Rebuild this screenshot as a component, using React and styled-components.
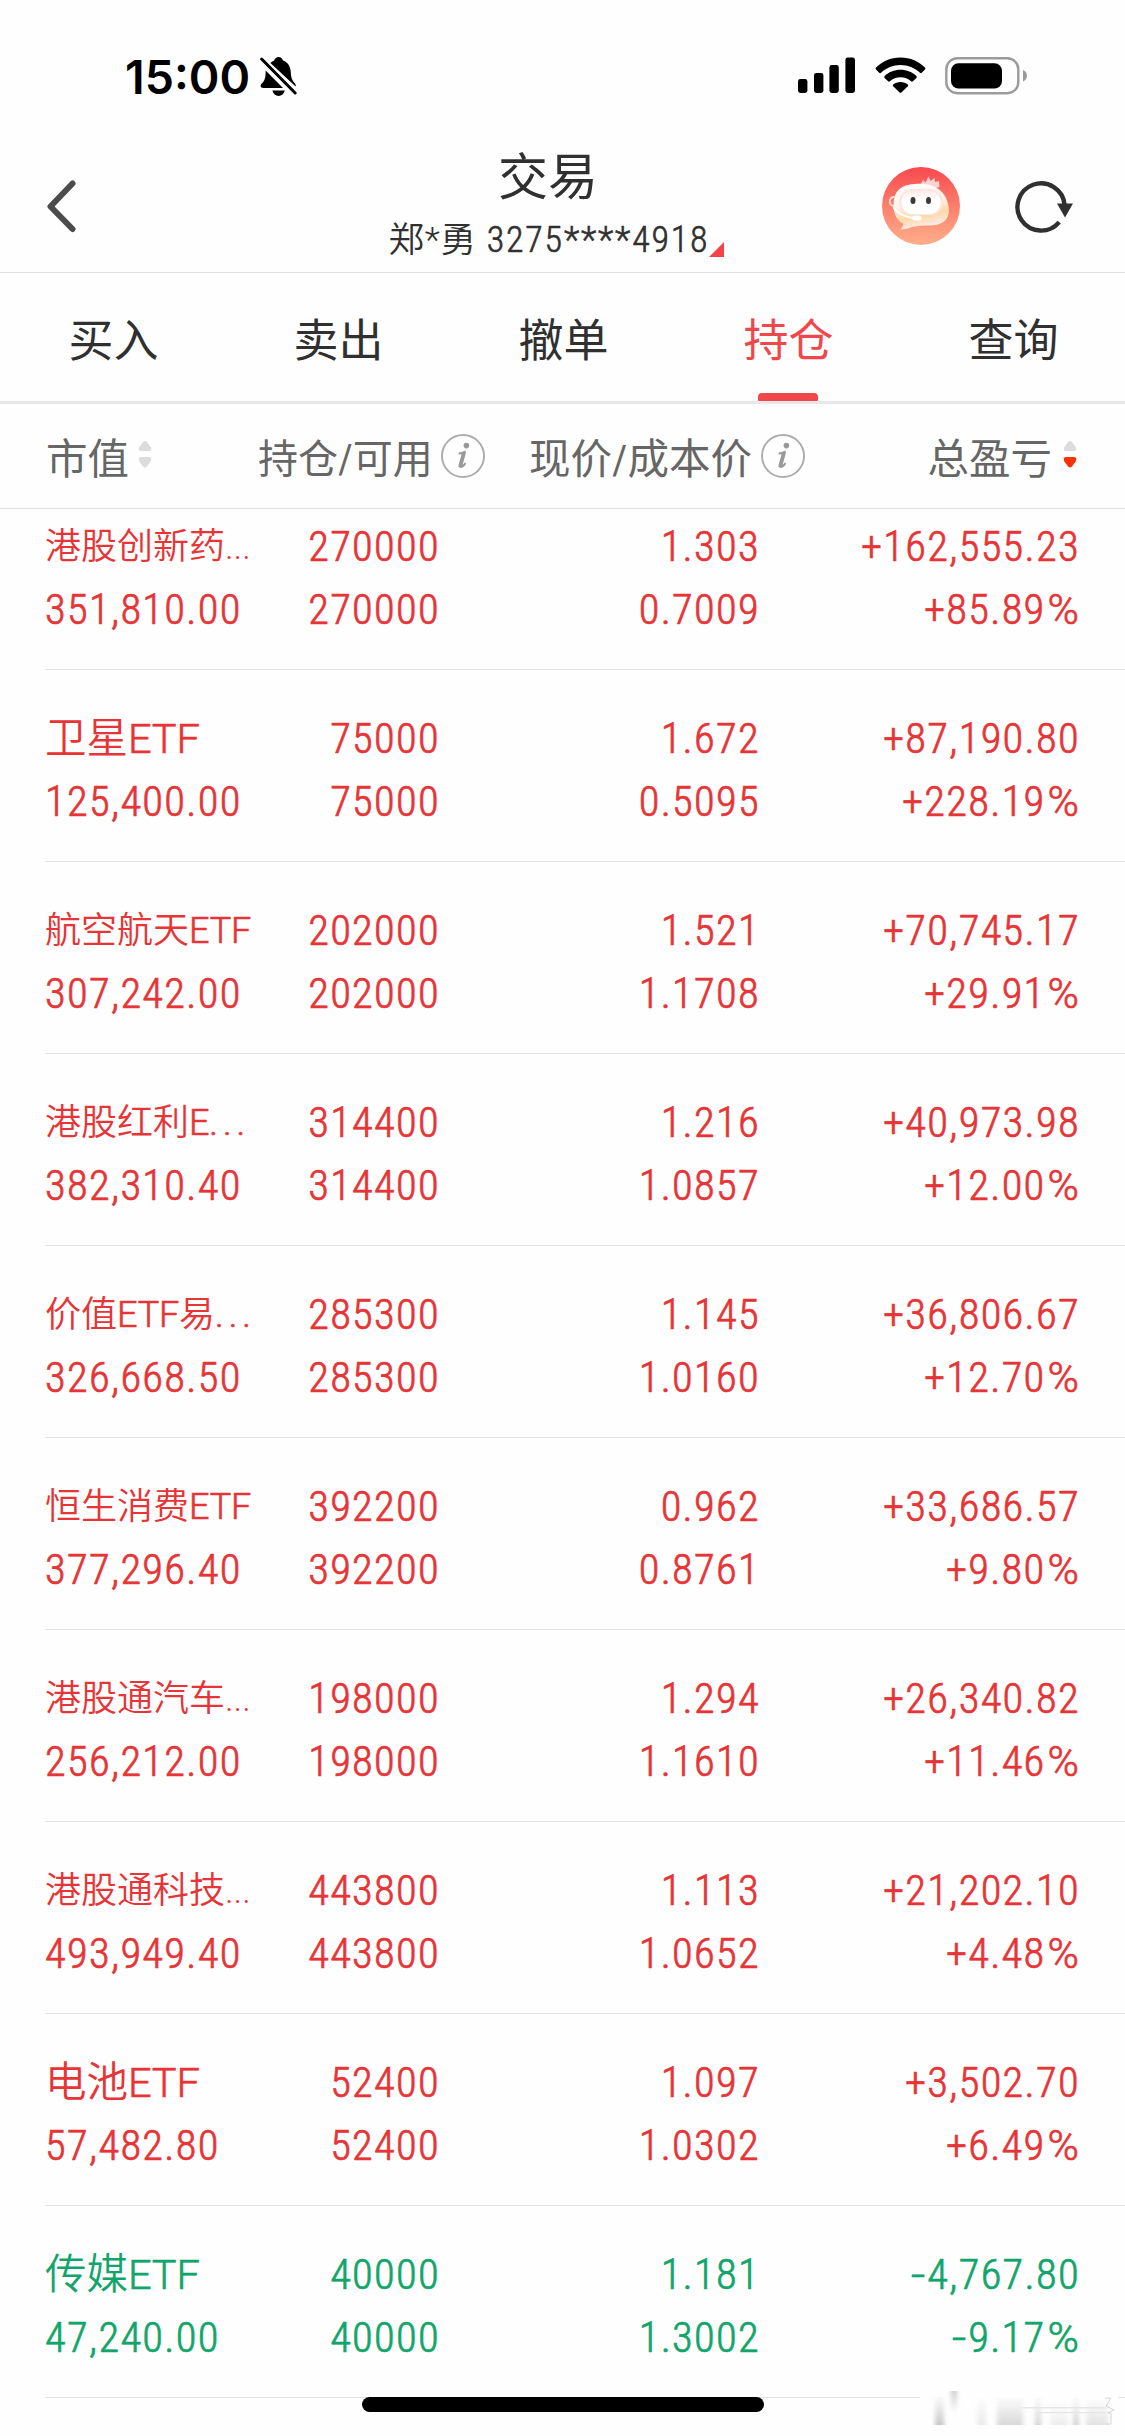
import React from "react";
import styled, { createGlobalStyle } from "styled-components";

const tabs = ["买入", "卖出", "撤单", "持仓", "查询"];

const holdings = [
  { name: "港股创新药...", small: true, value: "351,810.00", qty: "270000", usable: "270000", price: "1.303", cost: "0.7009", profit: "+162,555.23", rate: "+85.89%" },
  { name: "卫星ETF", value: "125,400.00", qty: "75000", usable: "75000", price: "1.672", cost: "0.5095", profit: "+87,190.80", rate: "+228.19%" },
  { name: "航空航天ETF", small: true, value: "307,242.00", qty: "202000", usable: "202000", price: "1.521", cost: "1.1708", profit: "+70,745.17", rate: "+29.91%" },
  { name: "港股红利E", dots: true, small: true, value: "382,310.40", qty: "314400", usable: "314400", price: "1.216", cost: "1.0857", profit: "+40,973.98", rate: "+12.00%" },
  { name: "价值ETF易", dots: true, small: true, value: "326,668.50", qty: "285300", usable: "285300", price: "1.145", cost: "1.0160", profit: "+36,806.67", rate: "+12.70%" },
  { name: "恒生消费ETF", small: true, value: "377,296.40", qty: "392200", usable: "392200", price: "0.962", cost: "0.8761", profit: "+33,686.57", rate: "+9.80%" },
  { name: "港股通汽车...", small: true, value: "256,212.00", qty: "198000", usable: "198000", price: "1.294", cost: "1.1610", profit: "+26,340.82", rate: "+11.46%" },
  { name: "港股通科技...", small: true, value: "493,949.40", qty: "443800", usable: "443800", price: "1.113", cost: "1.0652", profit: "+21,202.10", rate: "+4.48%" },
  { name: "电池ETF", value: "57,482.80", qty: "52400", usable: "52400", price: "1.097", cost: "1.0302", profit: "+3,502.70", rate: "+6.49%" },
  { name: "传媒ETF", value: "47,240.00", qty: "40000", usable: "40000", price: "1.181", cost: "1.3002", profit: "-4,767.80", rate: "-9.17%", down: true },
];

const SortIcon = ({ desc }) => (
  <SortSvg width="14" height="28" viewBox="0 0 14 28">
    <path d="M7 1 Q8 1 9 2 L13 7.5 Q14 11 11 11 H3 Q0 11 1 7.5 L5 2 Q6 1 7 1Z" fill="#dcdcdc" />
    <path d="M7 27.5 Q6 27.5 5 26.5 L1 21 Q0 17 3 17 H11 Q14 17 13 21 L9 26.5 Q8 27.5 7 27.5Z" fill={desc ? "#ff3205" : "#dcdcdc"} />
  </SortSvg>
);

const InfoIcon = () => (
  <svg width="44" height="44" viewBox="0 0 44 44">
    <circle cx="22" cy="22" r="21" fill="none" stroke="#adadad" strokeWidth="2" />
    <circle cx="25.4" cy="11.6" r="2.8" fill="#999" />
    <path d="M17.6 19.6 Q21 19.4 24 18 L20.3 31.4 Q20 33.4 21.6 32.4 Q23 31.4 24.6 29.2" fill="none" stroke="#999" strokeWidth="2" strokeLinejoin="round" />
    <path d="M22.6 19.5 L19.2 32" stroke="#999" strokeWidth="3.6" strokeLinecap="round" />
  </svg>
);

const BellOff = () => (
  <svg width="39" height="41" viewBox="0 0 39 41">
    <path d="M11.4 7 C12.6 5.6 14 4.9 15.2 4.4 C16 2.4 17.4 1 19.5 1 C21.8 1 23.2 2.4 24 4.4 C29.6 6.4 31.6 11 31.8 16.5 C32 22.4 33.6 24.8 36 27.4 C36.8 28.4 36.9 29.4 36.6 30.6Z" fill="#000" />
    <path d="M6.6 14.4 L24 32 H4.2 C1.4 32 .9 29.4 2.8 27.6 C5.8 24.8 6.9 20.6 6.6 14.4Z" fill="#000" />
    <path d="M13.4 34.6 H25.8 C25 38 22.6 40 19.6 40 C16.6 40 14.2 38 13.4 34.6Z" fill="#000" />
    <path d="M2.6 3 L36.2 37" stroke="#000" strokeWidth="3" strokeLinecap="round" />
  </svg>
);

const SignalIcon = () => (
  <svg width="58" height="36" viewBox="0 0 58 36">
    <rect x="0" y="22" width="9.4" height="14" rx="2.4" />
    <rect x="16" y="16" width="9.4" height="20" rx="2.4" />
    <rect x="31.4" y="8" width="9.4" height="28" rx="2.4" />
    <rect x="47.4" y="0.5" width="9.6" height="35.5" rx="2.4" />
  </svg>
);

const WifiIcon = () => (
  <svg width="51" height="37" viewBox="0 0 51 37">
    <path d="M25.5 0.5 C35.5 0.5 44 4.4 50 10.6 Q51 11.6 50 12.6 L46.8 15.8 Q45.9 16.6 45 15.8 C39.8 10.8 33 7.9 25.5 7.9 C18 7.9 11.2 10.8 6 15.8 Q5.1 16.6 4.2 15.8 L1 12.6 Q0 11.6 1 10.6 C7 4.4 15.5 0.5 25.5 0.5Z" />
    <path d="M25.5 12.7 C31.9 12.7 37.3 15.1 41.4 18.9 Q42.3 19.9 41.4 20.9 L37.9 24.3 Q37 25 36.1 24.3 C33.2 21.7 29.6 20.2 25.5 20.2 C21.4 20.2 17.8 21.7 14.9 24.3 Q14 25 13.1 24.3 L9.6 20.9 Q8.7 19.9 9.6 18.9 C13.7 15.1 19.1 12.7 25.5 12.7Z" />
    <path d="M25.5 25 C28.4 25 31 26 32.8 27.4 Q33.7 28.3 32.8 29.2 L26.4 35.6 Q25.5 36.4 24.6 35.6 L18.2 29.2 Q17.3 28.3 18.2 27.4 C20 26 22.6 25 25.5 25Z" />
  </svg>
);

const BatteryIcon = () => (
  <svg width="83" height="38" viewBox="0 0 83 38">
    <rect x="1.3" y="1.3" width="72" height="34.9" rx="11" fill="none" stroke="#9b9b9b" strokeWidth="2.4" />
    <rect x="6" y="6.2" width="51" height="25.2" rx="7.5" />
    <path d="M78 13 C80.6 14 82 16.2 82 18.8 C82 21.4 80.6 23.6 78 24.6Z" fill="#9b9b9b" />
  </svg>
);

const Assistant = () => (
  <svg width="78" height="78" viewBox="0 0 78 78">
    <defs>
      <linearGradient id="bg" x1="0" y1="0" x2="0" y2="1">
        <stop offset="0" stopColor="#f9484f" />
        <stop offset="0.5" stopColor="#fb7f6c" />
        <stop offset="1" stopColor="#ffae8b" />
      </linearGradient>
      <linearGradient id="head" x1="0" y1="0" x2="0.25" y2="1">
        <stop offset="0" stopColor="#fff" />
        <stop offset="0.5" stopColor="#fff3ec" />
        <stop offset="0.78" stopColor="#fdd9a8" />
        <stop offset="1" stopColor="#ffe9df" />
      </linearGradient>
      <linearGradient id="face" x1="0" y1="0" x2="0" y2="1">
        <stop offset="0" stopColor="#ffeae8" />
        <stop offset="0.35" stopColor="#fff" />
        <stop offset="1" stopColor="#fff" />
      </linearGradient>
    </defs>
    <circle cx="39" cy="39" r="39" fill="url(#bg)" />
    <path d="M38 18 C39 16 40 15.5 41 13 L43.5 15.5 L46.5 9.5 L48.5 14 L52.5 11 L53 15 L57 14 L57.5 20 L50 22Z" fill="#ffd3cf" />
    <path d="M12 39 C6 39 6.5 29.5 12.5 30" fill="none" stroke="#ffe3dc" strokeWidth="1.8" />
    <path d="M33 17 C54 15 66 26 67 43 C67 54 59 58.5 47 58.5 C38 58.5 35 59.5 30 60 C26 62 22 62.5 18.5 62.2 C21 60 21.5 58 21 56.5 C14 53 11.5 46 11.5 38 C11.5 24 19 17.5 33 17Z" fill="url(#head)" />
    <rect x="17" y="22" width="44" height="26" rx="13" fill="#ffe5df" />
    <rect x="19.5" y="23.5" width="39" height="23.5" rx="11.5" fill="url(#face)" />
    <ellipse cx="31" cy="33.5" rx="2.5" ry="3.6" fill="#3b3835" />
    <ellipse cx="46.5" cy="33.5" rx="2.5" ry="3.6" fill="#3b3835" />
    <path d="M12 41 C15 45.5 22 49.5 31 51" fill="none" stroke="#fff" strokeWidth="2.2" strokeLinecap="round" />
    <rect x="30" y="48.5" width="9.5" height="5" rx="2.4" fill="#fff" />
  </svg>
);

const Watermark = () => (
  <WatermarkSvg width="200" height="40" viewBox="0 0 200 40">
    <defs>
      <linearGradient id="fade" x1="0" y1="0" x2="0" y2="1">
        <stop offset="0" stopColor="#cfcfcf" stopOpacity="0.1" />
        <stop offset="1" stopColor="#c8c8c8" />
      </linearGradient>
      <linearGradient id="fadeUp" x1="0" y1="0" x2="0" y2="1">
        <stop offset="0" stopColor="#ccc" />
        <stop offset="1" stopColor="#ccc" stopOpacity="0" />
      </linearGradient>
      <filter id="soft" x="-0.2" width="1.4">
        <feGaussianBlur stdDeviation="2.2 0.3" />
      </filter>
    </defs>
    <rect width="198" height="40" fill="#fefefe" />
    <g filter="url(#soft)">
      <rect x="15" y="7" width="9" height="28" fill="url(#fade)" />
      <rect x="31" y="1" width="6" height="22" fill="url(#fadeUp)" />
      <rect x="57" y="8" width="9" height="27" fill="url(#fade)" opacity="0.4" />
      <rect x="77" y="8" width="26" height="27" fill="url(#fade)" opacity="0.7" />
      <rect x="115" y="8" width="6" height="27" fill="url(#fade)" opacity="0.8" />
      <rect x="130" y="12" width="18" height="23" fill="url(#fade)" opacity="0.3" />
      <rect x="153" y="8" width="6" height="27" fill="url(#fade)" opacity="0.8" />
      <rect x="166" y="10" width="22" height="25" fill="url(#fade)" opacity="0.5" />
      <rect x="103" y="17" width="84" height="1.5" fill="#e6e6e6" />
      <rect x="115" y="22" width="72" height="1.2" fill="#e6e6e6" />
    </g>
    <path d="M185 8 H191 L186 16 L194 20 L188 23 H191 V34 H186" fill="none" stroke="#d4d4d4" strokeWidth="1" />
  </WatermarkSvg>
);

/* latin letters in a fund name are set wider than the figures */
const FundName = ({ item }) => (
  <Name $small={item.small}>
    {item.name.split(/([A-Z]+)/).map((part, i) =>
      i % 2 ? <Latin key={i}>{part}</Latin> : part
    )}
    {item.dots && <Dots>...</Dots>}
  </Name>
);

const Signed = ({ text }) => (
  <span>
    {text[0] === "-" ? <Minus>-</Minus> : text[0]}
    {text.slice(1).replace("%", "")}
    {text.endsWith("%") && <Percent>%</Percent>}
  </span>
);

const App = () => {
  return (
    <Screen>
      <GlobalStyle />
      <StatusBar>
        <Clock>
          <span>15:00</span>
          <BellOff />
        </Clock>
        <StatusIcons>
          <SignalIcon />
          <WifiIcon />
          <BatteryIcon />
        </StatusIcons>
      </StatusBar>

      <Header>
        <BackButton aria-label="返回">
          <svg width="32" height="54" viewBox="0 0 32 54">
            <path d="M27.5 4.5 L5.5 27.5 L27.5 50" fill="none" stroke="#4c4c4c" strokeWidth="6" strokeLinecap="round" strokeLinejoin="round" />
          </svg>
        </BackButton>
        <Heading>
          <h1>交易</h1>
          <Account><small>郑*勇</small> 3275****4918</Account>
        </Heading>
        <Actions>
          <Assistant />
          <svg width="60" height="56" viewBox="0 0 60 56">
            <path d="M45.2 44.1 A23.6 23.6 0 1 1 50.6 27" fill="none" stroke="#303030" strokeWidth="4.4" />
            <path d="M43 25.5 H59 L51 39.5Z" fill="#303030" />
          </svg>
        </Actions>
      </Header>

      <Tabs>
        {tabs.map((tab) => (
          <Tab key={tab} $active={tab === "持仓"}>{tab}</Tab>
        ))}
      </Tabs>

      <ColumnHead>
        <HeadCell $gap="9px">市值<SortIcon /></HeadCell>
        <HeadCell $gap="8px" $size="40px">持仓/可用<InfoIcon /></HeadCell>
        <HeadCell $gap="9px">现价/成本价<InfoIcon /></HeadCell>
        <HeadCell $gap="11px" $end>总盈亏<SortIcon desc /></HeadCell>
      </ColumnHead>

      <Viewport>
        <List>
          {holdings.map((item) => (
            <Row key={item.name} $down={item.down}>
              <Cell $left>
                <FundName item={item} />
                <span>{item.value}</span>
              </Cell>
              <Cell>
                <span>{item.qty}</span>
                <span>{item.usable}</span>
              </Cell>
              <Cell>
                <span>{item.price}</span>
                <span>{item.cost}</span>
              </Cell>
              <Cell>
                <Signed text={item.profit} />
                <Signed text={item.rate} />
              </Cell>
            </Row>
          ))}
        </List>
      </Viewport>
      <Watermark />
      <HomeBar />
    </Screen>
  );
};

const GlobalStyle = createGlobalStyle`
  * {
    box-sizing: border-box;
  }
  body {
    margin: 0;
    background: #fefefe;
    font-family: "Roboto Condensed", "Noto Sans CJK SC", sans-serif;
  }
  svg {
    display: block;
    flex: none;
  }
`;

const Screen = styled.div`
  position: relative;
  display: flex;
  flex-direction: column;
  width: 1125px;
  height: 2436px;
  overflow: hidden;
  background: #fefefe;
  color: #303030;
`;

const StatusBar = styled.div`
  display: flex;
  justify-content: space-between;
  height: 132px;
  padding: 0 97px 0 125px;
`;

const Clock = styled.div`
  display: flex;
  gap: 9px;
  padding-top: 56px;
  color: #000;
  span {
    font-family: Inter, sans-serif;
    font-weight: 600;
    font-size: 46.5px;
    line-height: 42px;
  }
`;

const StatusIcons = styled.div`
  display: flex;
  gap: 19px;
  padding-top: 57px;
`;

const Header = styled.header`
  display: grid;
  grid-template-columns: 225px 646px 1fr;
  height: 141px;
  border-bottom: 1px solid #e2e2e2;
`;

const BackButton = styled.button`
  display: flex;
  align-items: center;
  padding: 7px 0 0 45px;
  border: 0;
  background: none;
`;

const Heading = styled.div`
  display: flex;
  flex-direction: column;
  align-items: center;
  padding-top: 16px;
  h1 {
    margin: 0;
    font-size: 50px;
    font-weight: 400;
    line-height: 60px;
  }
`;

const Account = styled.div`
  position: relative;
  margin-left: 2px;
  font-size: 36px;
  font-weight: 350;
  line-height: 64px;
  letter-spacing: 1.8px;
  white-space: nowrap;
  -webkit-text-stroke: 0.6px currentColor;
  small {
    font-size: 35.5px;
    letter-spacing: 0.7px;
    -webkit-text-stroke: 0;
  }
  &::after {
    content: "";
    position: absolute;
    right: -15px;
    bottom: 15px;
    border-left: 15px solid transparent;
    border-bottom: 15px solid #f4444a;
  }
`;

const Actions = styled.div`
  display: flex;
  align-items: center;
  gap: 54px;
  padding: 7px 0 0 11px;
`;

const Tabs = styled.nav`
  display: flex;
  height: 131px;
  border-bottom: 3px solid #e6e6eb;
`;

const Tab = styled.div`
  position: relative;
  flex: 1;
  padding-left: 2px;
  text-align: center;
  font-size: 45px;
  line-height: 137px;
  color: ${(p) => (p.$active ? "#f0484a" : "#303030")};
  &::after {
    content: "";
    display: ${(p) => (p.$active ? "block" : "none")};
    position: absolute;
    left: 83px;
    bottom: 0;
    width: 60px;
    height: 8px;
    border-radius: 4px 4px 1px 1px;
    background: #f0484a;
  }
`;

const ColumnHead = styled.div`
  display: grid;
  grid-template-columns: 212px 271px 1fr auto;
  height: 105px;
  padding: 0 48px 0 46px;
  border-bottom: 1px solid #e2e2e2;
  color: #666;
`;

const HeadCell = styled.div`
  display: flex;
  align-items: center;
  justify-content: ${(p) => (p.$end ? "flex-end" : "flex-start")};
  gap: ${(p) => p.$gap};
  font-size: ${(p) => p.$size || "41.5px"};
  white-space: nowrap;
`;

const SortSvg = styled.svg`
  margin-top: -4px;
`;

const Viewport = styled.div`
  flex: 1;
  min-height: 0;
  overflow: hidden;
`;

/* scrolled part way into the first row */
const List = styled.div`
  margin-top: -31px;
`;

const Row = styled.div`
  display: grid;
  grid-template-columns: 210px 185px 320px 320px;
  height: 192px;
  margin-left: 45px;
  padding-top: 37px;
  border-bottom: 1px solid #e2e2e2;
  color: ${(p) => (p.$down ? "#12a56b" : "#e63437")};
`;

const Cell = styled.div`
  display: flex;
  flex-direction: column;
  align-items: ${(p) => (p.$left ? "flex-start" : "flex-end")};
  font-size: 42.5px;
  font-weight: 350;
  line-height: 63px;
  letter-spacing: 1.3px;
  white-space: nowrap;
  -webkit-text-stroke: 0.7px currentColor;
`;

const Name = styled.span`
  font-size: ${(p) => (p.$small ? "36px" : "41.5px")};
  line-height: ${(p) => (p.$small ? "65px" : "63px")};
  margin-bottom: ${(p) => (p.$small ? "-2px" : "0")};
  letter-spacing: 0;
  -webkit-text-stroke: 0;
`;

const Latin = styled.span`
  font-family: Roboto, sans-serif;
  letter-spacing: -0.2px;
  -webkit-text-stroke: 0.6px currentColor;
`;

const Dots = styled.span`
  letter-spacing: 5px;
  -webkit-text-stroke: 0.6px currentColor;
`;

const Minus = styled.span`
  display: inline-block;
  margin: 0 2px 0 3px;
  transform: scaleX(1.4);
`;

const Percent = styled.span`
  margin: 0 1px 0 2px;
  font-family: Roboto, sans-serif;
  letter-spacing: 0;
`;

const WatermarkSvg = styled.svg`
  position: absolute;
  left: 920px;
  top: 2390px;
`;

const HomeBar = styled.div`
  position: absolute;
  left: 362px;
  top: 2397px;
  width: 402px;
  height: 15px;
  border-radius: 8px;
  background: #000;
`;

export default App;
